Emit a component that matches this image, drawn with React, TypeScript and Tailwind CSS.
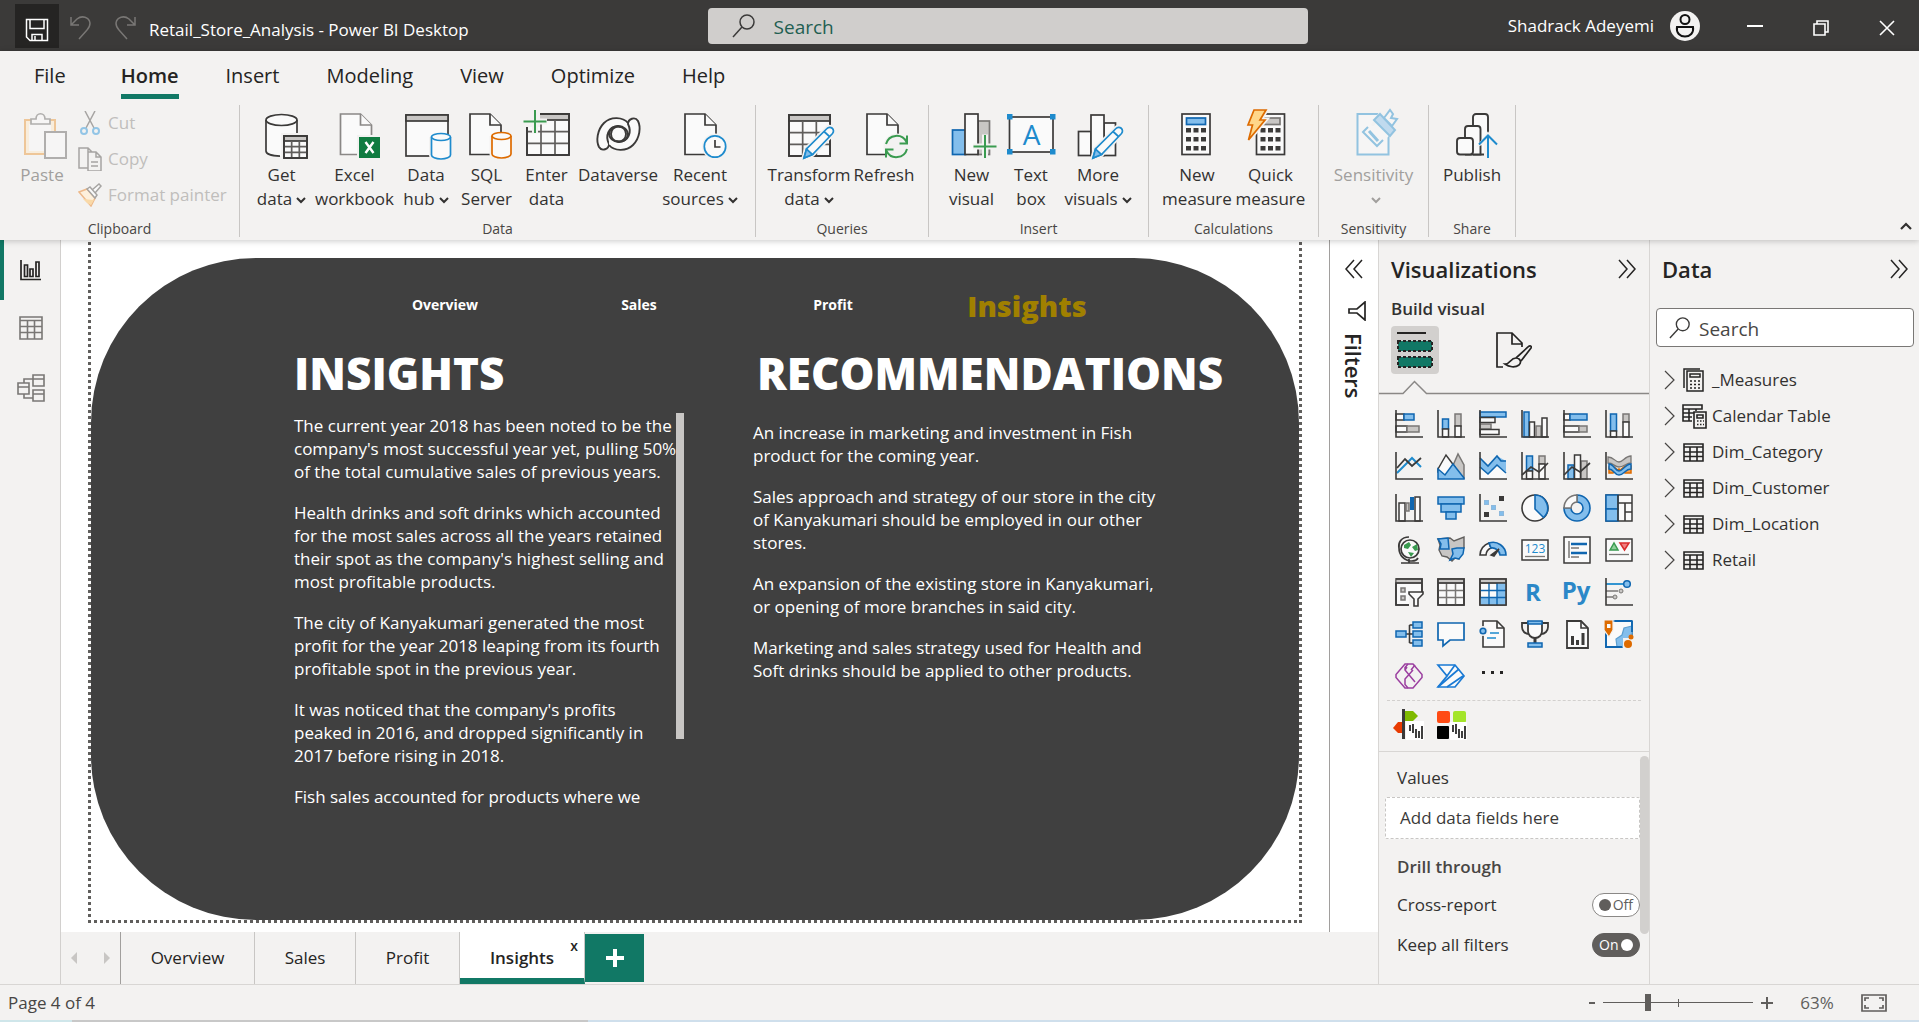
import React from "react";

type Kind = "w" | "b" | "g";
const FILL: Record<Kind, string> = { w: "#fafafa", b: "#83beec", g: "#c8c6c4" };
const LINE: Record<Kind, string> = { w: "#3b3a39", b: "#0f66b0", g: "#797775" };
const DARK = "#3b3a39";

function R({ k, x, y, w, h }: { k: Kind; x: number; y: number; w: number; h: number }) {
  return <rect x={x} y={y} width={w} height={h} fill={FILL[k]} stroke={LINE[k]} strokeWidth="1.5" />;
}
const Axis = () => <path d="M1 0V27H28" fill="none" stroke={DARK} strokeWidth="1.6" />;

/* ---------- ribbon drawings, 48 unit grid ---------- */

function Big({ children, dim }: { children: React.ReactNode; dim?: boolean }) {
  return (
    <svg viewBox="0 0 48 48" aria-hidden="true" className={dim ? "size-12 overflow-visible opacity-45" : "size-12 overflow-visible"} fill="none" strokeWidth="1.7">
      {children}
    </svg>
  );
}
function Doc({ x, c = DARK }: { x: number; c?: string }) {
  return (
    <g transform={`translate(${x} 0)`} stroke={c}>
      <path d="M0 3H20L31 14V43.500H0Z" fill="#fafafa" />
      <path d="M20 3V14H31" fill="#fafafa" />
    </g>
  );
}
function Cyl({ x, y, w, h, c }: { x: number; y: number; w: number; h: number; c: string }) {
  const r = w / 2;
  return (
    <g stroke={c} fill="#fafafa">
      <path d={`M${x} ${y + 4}V${y + h - 4}A${r} 4 0 0 0 ${x + w} ${y + h - 4}V${y + 4}`} stroke="#f3f2f1" strokeWidth="5" />
      <path d={`M${x} ${y + 4}V${y + h - 4}A${r} 4 0 0 0 ${x + w} ${y + h - 4}V${y + 4}`} />
      <ellipse cx={x + r} cy={y + 4} rx={r} ry="3.5" />
    </g>
  );
}
function Grid({ x, y, w, h, hd }: { x: number; y: number; w: number; h: number; hd: number }) {
  const b = h - hd;
  return (
    <g stroke={DARK}>
      <rect x={x} y={y} width={w} height={h} fill="#fafafa" />
      <rect x={x} y={y} width={w} height={hd} fill="#c8c6c4" />
      <path
        stroke="#605e5c"
        d={`M${x + w / 3} ${y + hd}v${b}M${x + (2 * w) / 3} ${y + hd}v${b}M${x} ${y + hd + b / 3}h${w}M${x} ${y + hd + (2 * b) / 3}h${w}`}
      />
      <rect x={x} y={y} width={w} height={h} />
    </g>
  );
}
function Pencil() {
  return (
    <g>
      <path d="M19 47l2.500-9L42 17.500a3.500 3.500 0 0 1 5.500 5L27.500 43.500z" fill="#fafafa" stroke="#f3f2f1" strokeWidth="5" />
      <path d="M19 47l2.500-9L42 17.500a3.500 3.500 0 0 1 5.500 5L27.500 43.500z" fill="#fafafa" stroke="#1e8bcd" />
      <path d="M19 47l2.500-9 6 5.500z" fill="#83beec" stroke="#1e8bcd" />
      <path d="M39 20.500l5.500 5" stroke="#1e8bcd" />
    </g>
  );
}
function Plus({ x, y }: { x: number; y: number }) {
  return (
    <g>
      <path d={`M${x - 12} ${y}h24M${x} ${y - 12}v24`} stroke="#f3f2f1" strokeWidth="6" />
      <path d={`M${x - 11.5} ${y}h23M${x} ${y - 11.5}v23`} stroke="#3a9b50" strokeWidth="2" />
    </g>
  );
}
function Calc({ x, hot }: { x: number; hot?: boolean }) {
  return (
    <g transform={`translate(${x} 0)`}>
      <rect x="0" y="3" width="28" height="40.500" fill="#fafafa" stroke={DARK} />
      <rect x="4.500" y="7" width="19" height="6.500" fill={hot ? "#83beec" : "#c8c6c4"} stroke={hot ? "#0f66b0" : "#797775"} />
      {[17, 26, 35].map((ky) =>
        [4, 11.5, 19].map((kx) => <rect key={`${kx}-${ky}`} x={kx} y={ky} width="5" height="4.500" fill={DARK} />)
      )}
    </g>
  );
}

const GetDataIcon = () => (
  <Big>
    <path d="M8 9V40C8 43 15 45 23 45V22H39V9Z" fill="#fafafa" />
    <ellipse cx="23.500" cy="9" rx="15.500" ry="5.500" fill="#fafafa" stroke={DARK} />
    <path d="M8 9V40C8 43 14 45 22 45.200M39 9V22" stroke={DARK} />
    <Grid x={26} y={25} w={23} h={22} hd={5} />
  </Big>
);
const ExcelIcon = () => (
  <Big>
    <Doc x={9.5} c="#8a8886" />
    <rect x="26" y="24" width="24" height="24" fill="#f3f2f1" />
    <rect x="28" y="26" width="21" height="21" fill="#107c41" />
    <path d="M34.500 31L42.500 42M42.500 31L34.500 42" stroke="#fff" strokeWidth="2.400" />
  </Big>
);
const HubIcon = () => (
  <Big>
    <rect x="4" y="4" width="42" height="41" fill="#fafafa" stroke={DARK} />
    <rect x="4" y="4" width="42" height="6" fill="#c8c6c4" stroke={DARK} />
    <Cyl x={29.5} y={22} w={19} h={26} c="#1e8bcd" />
  </Big>
);
const SqlIcon = () => (
  <Big>
    <Doc x={7} />
    <Cyl x={29} y={21} w={19} h={26} c="#dd6b00" />
  </Big>
);
const EnterIcon = () => (
  <Big>
    <Grid x={4} y={3} w={42} h={41} hd={6} />
    <rect x="-1" y="-2" width="18" height="18" fill="#f3f2f1" />
    <Plus x={12} y={10.5} />
  </Big>
);
const DataverseIcon = () => (
  <Big>
    <g stroke={DARK} strokeWidth="1.900" fill="#fafafa">
      <path d="M34 12C29 6 17 5 10 12C3 19 2 30 5 36C8 41 15 38 15 33C11 25 14 16 24 15C30 15 34 19 34 24" />
      <path d="M15 34C20 40 32 41 39 34C46 27 47 16 44 10C41 5 34 8 34 13C38 21 35 30 25 31C19 31 15 27 15 22" />
      <circle cx="24.500" cy="23" r="7.500" />
      <path d="M15 24C15 17 21 14 27 16M34 22C34 29 28 32 22 30" fill="none" />
    </g>
  </Big>
);
const RecentIcon = () => (
  <Big>
    <Doc x={9} />
    <circle cx="39" cy="35.500" r="13" fill="#f3f2f1" />
    <circle cx="39" cy="35.500" r="10.700" fill="#fafafa" stroke="#1e8bcd" />
    <path d="M39 29V36H44.500" stroke={DARK} />
  </Big>
);
const TransformIcon = () => (
  <Big>
    <Grid x={4} y={4} w={41} h={41} hd={6} />
    <Pencil />
  </Big>
);
const RefreshIcon = () => (
  <Big>
    <Doc x={7} />
    <circle cx="36.500" cy="35.500" r="13" fill="#f3f2f1" />
    <g stroke="#3a9b50" strokeWidth="2">
      <path d="M26 33A11 11 0 0 1 46.500 31M47 24.500V32.500H39.500" />
      <path d="M47 38A11 11 0 0 1 26.500 40M26 46.500V38.500H33.500" />
    </g>
  </Big>
);
const NewVisualIcon = () => (
  <Big>
    <rect x="4.500" y="19" width="13" height="24.500" fill="#83beec" stroke="#0f66b0" />
    <rect x="30" y="10" width="11.500" height="33.500" fill="#c8c6c4" stroke="#797775" />
    <rect x="17" y="3" width="13" height="40.500" fill="#fafafa" stroke={DARK} />
    <Plus x={37} y={35.5} />
  </Big>
);
const TextBoxIcon = () => (
  <Big>
    <rect x="2.500" y="6" width="43.500" height="35" fill="#fafafa" stroke={DARK} />
    {[0, 43].map((x) => [3, 38].map((y) => <rect key={`${x}-${y}`} x={x} y={y} width="5.500" height="5.500" fill="#1e8bcd" />))}
    <text x="24.500" y="33.500" textAnchor="middle" fontSize="28" fill="#1e8bcd" className="font-['Open_Sans',sans-serif]">A</text>
  </Big>
);
const MoreVisualsIcon = () => (
  <Big>
    <g fill="#fafafa" stroke={DARK}>
      <rect x="4.500" y="20.500" width="12.500" height="24" />
      <rect x="30" y="12" width="11.500" height="32.500" />
      <rect x="17" y="4" width="13" height="40.500" />
    </g>
    <Pencil />
  </Big>
);
const NewMeasureIcon = () => (
  <Big>
    <Calc x={9} hot />
  </Big>
);
const QuickMeasureIcon = () => (
  <Big>
    <Calc x={9.5} />
    <path d="M7 -1H19L13 9H18L1.500 29L5.500 14H1Z" fill="#f3f2f1" stroke="#f3f2f1" strokeWidth="5" />
    <path d="M7 -1H19L13 9H18L1.500 29L5.500 14H1Z" fill="#ffd78a" stroke="#dd6b00" />
  </Big>
);
const SensitivityIcon = () => (
  <Big dim>
    <rect x="7.500" y="3" width="31" height="40.500" fill="#fafafa" stroke="#1e8bcd" strokeWidth="2" />
    <path d="M21 14L31 -2L50 8L42 24L36 22Z" fill="#f3f2f1" />
    <g stroke="#1e8bcd" strokeWidth="2">
      <path d="M27 11L14 26V31L27 36L41 23Z" fill="#fafafa" stroke="none" />
      <path d="M18 16L13 21L27 35L33 29" fill="#fafafa" />
      <path d="M19 20L28 30" strokeWidth="3" />
      <path d="M24 9L40 25L45 19L30 3Z" fill="#83beec" />
      <path d="M34 7L40 -1L43 3L41 7L47 8L42 15Z" fill="#fafafa" />
    </g>
  </Big>
);
const PublishIcon = () => (
  <Big>
    <g fill="#fafafa" stroke={DARK} strokeWidth="1.900">
      <path d="M25 43V6a3 3 0 0 1 3-3H37a3 3 0 0 1 3 3V43.500H25" />
      <path d="M17 43V18a3 3 0 0 1 3-3H29.500a3 3 0 0 1 3 3V43.500H17" />
      <rect x="9" y="27" width="16" height="16.500" rx="3" />
    </g>
    <path d="M40 22L49 34L43 32V47H37V32L31 34Z" fill="#f3f2f1" stroke="#f3f2f1" strokeWidth="2" />
    <path d="M40 47V25M31 33.500L40 24.500L49 33.500" stroke="#1e8bcd" strokeWidth="2" />
  </Big>
);
const PasteIcon = () => (
  <Big dim>
    <rect x="7" y="9" width="30" height="34" fill="#ffe9c4" stroke="#e8912d" strokeWidth="2" />
    <rect x="11" y="13" width="22" height="27" fill="#fafafa" />
    <path d="M13 13V8H18C18 1 27 1 27 8H32V13Z" fill="#fafafa" stroke="#605e5c" />
    <rect x="27" y="21" width="21" height="26" fill="#fafafa" stroke="#605e5c" strokeWidth="2" />
  </Big>
);

/* ---------- visual gallery drawings, 28 unit grid ---------- */

const gallery: [string, React.ReactNode][] = [
  ["Stacked bar chart", <><R k="w" x={1} y={4} w={8} h={6} /><R k="b" x={9} y={4} w={10} h={6} /><R k="w" x={1} y={16} w={11} h={6} /><R k="g" x={12} y={16} w={12} h={6} /><Axis /></>],
  ["Stacked column chart", <><R k="b" x={5.5} y={9} w={6} h={10} /><R k="w" x={5.5} y={19} w={6} h={8} /><R k="g" x={18} y={4} w={6} h={12} /><R k="w" x={18} y={16} w={6} h={11} /><Axis /></>],
  ["Clustered bar chart", <><R k="b" x={1} y={2} w={26} h={5} /><R k="w" x={1} y={7.5} w={15} h={5} /><R k="g" x={1} y={14} w={11} h={5} /><R k="w" x={1} y={19.5} w={19} h={5} /><Axis /></>],
  ["Clustered column chart", <><R k="b" x={3} y={2} w={5} h={25} /><R k="w" x={8.5} y={12} w={5} h={15} /><R k="g" x={15} y={16} w={5} h={11} /><R k="w" x={21} y={8} w={5} h={19} /><Axis /></>],
  ["100% stacked bar chart", <><R k="w" x={1} y={4} w={6} h={6} /><R k="b" x={7} y={4} w={17} h={6} /><R k="w" x={1} y={16} w={15} h={6} /><R k="g" x={16} y={16} w={8} h={6} /><Axis /></>],
  ["100% stacked column chart", <><R k="b" x={5.5} y={4} w={6} h={17} /><R k="w" x={5.5} y={21} w={6} h={6} /><R k="g" x={18} y={4} w={6} h={8} /><R k="w" x={18} y={12} w={6} h={15} /><Axis /></>],
  ["Line chart", <><path d="M2 21L17 6L26 15" stroke="#1e8bcd" strokeWidth="2" /><path d="M2 16L10 7L17 14L26 6" stroke={DARK} strokeWidth="1.8" /><Axis /></>],
  ["Area chart", <><path d="M14 18L21 2L27 13V26Z" fill="#c8c6c4" stroke="#797775" strokeWidth="1.5" /><path d="M1 17L9 3L18 15L8 25L1 20Z" fill="#fafafa" stroke={DARK} strokeWidth="1.5" /><path d="M1 17L8 23L16 12L27 26V27H1Z" fill="#83beec" stroke="#0f66b0" strokeWidth="1.5" /></>],
  ["Stacked area chart", <><path d="M1 15L9 23L18 13L27 21V27H1Z" fill="#fafafa" /><path d="M1 6L9 14L18 4L27 9V20L18 13L9 22L1 15Z" fill="#83beec" /><path d="M1 6L9 14L18 4L22 9H27M1 15L9 22L18 13L27 21" stroke="#0f66b0" strokeWidth="1.6" /><Axis /></>],
  ["Line and stacked column chart", <><R k="b" x={5.5} y={4} w={6} h={15} /><R k="w" x={5.5} y={19} w={6} h={8} /><R k="g" x={18} y={4} w={6} h={8} /><R k="w" x={18} y={12} w={6} h={15} /><path d="M1 23L10 15L18 20L27 11" stroke={DARK} strokeWidth="1.7" /><Axis /></>],
  ["Line and clustered column chart", <><R k="b" x={5} y={13} w={6} h={14} /><R k="g" x={18} y={9} w={6} h={18} /><R k="w" x={11.5} y={3} w={6} h={24} /><path d="M1 23L9 15L17 20L27 11" stroke={DARK} strokeWidth="1.7" /><Axis /></>],
  ["Ribbon chart", <><path d="M4 15H9L14 19L20 14H26V21H20L14 17L8 21H4Z" fill="#f8a04a" stroke="#dd6b00" strokeWidth="1.5" /><path d="M3 5C9 5 10 10 14 10S20 4 26 4V11C21 11 19 15 14 15S9 11 3 11Z" fill="#c8c6c4" stroke="#797775" strokeWidth="1.3" /><path d="M4 12C9 12 10 19 14 19S20 12 26 12V17C20 17 19 23 14 23S9 17 4 17Z" fill="#83beec" stroke="#0f66b0" strokeWidth="1.5" /><Axis /></>],
  ["Waterfall chart", <><R k="w" x={4} y={9} w={6} h={18} /><R k="g" x={11} y={9} w={3} h={8} /><rect x="15" y="3" width="4" height="13" fill="#0f66b0" /><R k="w" x={20} y={3} w={5} h={24} /><Axis /></>],
  ["Funnel", <><R k="b" x={1} y={3} w={26} h={7} /><R k="b" x={4} y={10} w={20} h={8} /><R k="b" x={9} y={18} w={10} h={7} /></>],
  ["Scatter chart", <><rect x="20" y="2" width="5" height="5" fill={DARK} /><rect x="5" y="18" width="5" height="5" fill={DARK} /><g fill="#83beec" stroke="#8db8dc"><rect x="5.500" y="6.500" width="4" height="4" /><rect x="12.500" y="11.500" width="4" height="4" /><rect x="20.500" y="17.500" width="4" height="4" /></g><Axis /></>],
  ["Pie chart", <><circle cx="14" cy="14" r="13" fill="#fafafa" stroke={DARK} strokeWidth="1.6" /><path d="M14 1A13 13 0 0 1 22.500 23.500L14 15Z" fill="#83beec" stroke="#0f66b0" strokeWidth="1.6" /></>],
  ["Donut chart", <><path d="M14 1A13 13 0 1 1 1 14H8A6 6 0 1 0 14 8Z" fill="#83beec" stroke="#0f66b0" strokeWidth="1.6" /><path d="M1 14A13 13 0 0 1 14 1V8A6 6 0 0 0 8 14Z" fill="#fafafa" stroke="#797775" strokeWidth="1.6" /></>],
  ["Treemap", <><R k="w" x={1} y={1} w={26} h={26} /><R k="b" x={1} y={1} w={12} h={14} /><R k="b" x={1} y={15} w={12} h={12} /><path d="M13 1V27M13 9H27M20 9V27M20 18H27" stroke={DARK} strokeWidth="1.6" /></>],
  ["Map", <><circle cx="15" cy="13" r="9" fill="#fafafa" stroke={DARK} strokeWidth="1.7" /><path d="M9 9L14 6L16 9L13 13L9 12ZM17 11L22 8L23 14L20 15ZM13 16L19 17L16 21Z" fill="#3a9b50" /><path d="M14 1C6 1 3 7 4 12C4 19 9 25 17 25C20 25 22 24 23 22M14 23V27M6 27H24" stroke={DARK} strokeWidth="1.7" /></>],
  ["Filled map", <><path d="M1 3L13 2L17 5L27 1V12L23 15L22 23L18 22L15 25L10 21L5 20L2 14L3 9Z" fill="#c8c6c4" stroke="#605e5c" strokeWidth="1.4" /><path d="M1 3L11 2L12 13H3L4 8Z" fill="#83beec" stroke="#0f66b0" strokeWidth="1.5" /><path d="M15 13L20 12H27L26 18L22 23L18 22L13 24L16 18Z" fill="#83beec" stroke="#0f66b0" strokeWidth="1.5" /></>],
  ["Gauge", <><path d="M1 19A13 13 0 0 1 10 7L12 12A8 8 0 0 0 7 19Z" fill="#fafafa" stroke={DARK} strokeWidth="1.6" /><path d="M10 7A13 13 0 0 1 27 19H21A8 8 0 0 0 12 12Z" fill="#83beec" stroke="#0f66b0" strokeWidth="1.6" /><path d="M12 19L20 13L15 20Z" fill={DARK} stroke={DARK} strokeWidth="1.5" /></>],
  ["Card", <><R k="w" x={1} y={4} w={26} h={20} /><text x="14" y="17" textAnchor="middle" fontSize="12" fill="#1e8bcd">123</text><path d="M4 20.500H24" stroke="#797775" strokeWidth="1.3" /></>],
  ["Multi-row card", <><R k="w" x={1} y={1} w={26} h={26} /><path d="M6 5V22" stroke="#797775" strokeWidth="1.5" /><path d="M8 8H24M8 17H24" stroke="#0f66b0" strokeWidth="2.400" /><path d="M8 12H16M8 21H16" stroke="#797775" strokeWidth="1.3" /></>],
  ["KPI", <><R k="w" x={1} y={3} w={26} h={22} /><path d="M5 14L9 7L13 14Z" fill="#8fd09a" stroke="#3a9b50" strokeWidth="1.5" /><path d="M15 7H24L19.500 14Z" fill="#f08080" stroke="#d92c2c" strokeWidth="1.5" /><path d="M4 18.500H24" stroke="#797775" strokeWidth="1.3" /></>],
  ["Slicer", <><R k="w" x={1} y={1} w={26} h={26} /><R k="g" x={1} y={1} w={26} h={4} /><path d="M1 1H27V5H1V27H15M27 1V14" stroke={DARK} strokeWidth="1.6" /><path d="M14 14H30V29H14Z" fill="#f3f2f1" /><R k="g" x={6} y={10} w={4} h={4} /><R k="g" x={6} y={18} w={4} h={4} /><path d="M14 14H28V16L23 21V28H19V21L14 16Z" fill="#fafafa" stroke={DARK} strokeWidth="1.6" /></>],
  ["Table", <><R k="w" x={1} y={1} w={26} h={26} /><R k="g" x={1} y={1} w={26} h={4} /><path d="M1 12.500H27M1 19.500H27M9.500 5V27M18.500 5V27" stroke="#797775" strokeWidth="1.5" /><path d="M1 1H27V27H1ZM1 5H27" stroke={DARK} strokeWidth="1.6" /></>],
  ["Matrix", <><R k="w" x={1} y={1} w={26} h={26} /><R k="g" x={1} y={1} w={26} h={4} /><path d="M1 20H18V5H27V27H1Z" fill="#83beec" /><path d="M1 12.500H27M1 19.500H27M10 5V27M18 5V27" stroke="#0f66b0" strokeWidth="1.4" /><path d="M1 1H27V27H1ZM1 5H27" stroke={DARK} strokeWidth="1.6" /></>],
  ["R script visual", <text x="12" y="23" textAnchor="middle" fontSize="24" fontWeight="700" fill="#2b88c8">R</text>],
  ["Python visual", <text x="13" y="21" textAnchor="middle" fontSize="24" fontWeight="700" fill="#2b88c8">Py</text>],
  ["Key influencers", <><path d="M1 6H18" stroke="#1e8bcd" strokeWidth="1.8" /><path d="M1 13H13M1 19H8" stroke="#797775" strokeWidth="1.6" /><circle cx="22" cy="6" r="3.300" fill="#83beec" stroke="#0f66b0" strokeWidth="1.5" /><circle cx="16" cy="13" r="2" fill="#c8c6c4" stroke="#797775" /><circle cx="10" cy="19" r="2" fill="#c8c6c4" stroke="#797775" /><Axis /></>],
  ["Decomposition tree", <><path d="M11 14H18M14.500 5V23M14.500 5H18M14.500 23H18" stroke={DARK} strokeWidth="1.6" /><R k="b" x={1} y={11} w={10} h={6} /><R k="b" x={18} y={2} w={9} h={6} /><R k="b" x={18} y={11} w={9} h={6} /><R k="b" x={18} y={20} w={9} h={6} /></>],
  ["Q&A", <path d="M1 3H27V20H13L6 26V20H1Z" fill="#fafafa" stroke="#0f66b0" strokeWidth="1.7" />],
  ["Smart narrative", <><path d="M4 1H18L25 8V27H4Z" fill="#fafafa" stroke={DARK} strokeWidth="1.6" /><path d="M18 1V8H25" stroke={DARK} strokeWidth="1.6" /><circle cx="4" cy="11" r="5" fill="#f3f2f1" /><circle cx="4" cy="11" r="2.800" fill="#83beec" stroke="#0f66b0" strokeWidth="1.6" /><path d="M11 13H20M8 18H17" stroke="#1e8bcd" strokeWidth="1.6" /></>],
  ["Metrics", <><path d="M7 3H1V7C1 11 4 14 8 14M21 3H27V7C27 11 24 14 20 14" stroke={DARK} strokeWidth="1.8" /><path d="M7 2H21V11C21 15 18 18 14 18S7 15 7 11Z" fill="#fafafa" stroke={DARK} strokeWidth="1.8" /><R k="b" x={7} y={1} w={14} h={3} /><path d="M14 18V23" stroke={DARK} strokeWidth="3" /><R k="b" x={7} y={23} w={14} h={4} /></>],
  ["Paginated report", <><path d="M4 1H18L25 8V28H4Z" fill="#fafafa" stroke={DARK} strokeWidth="1.8" /><path d="M18 1V8H25" stroke={DARK} strokeWidth="1.6" /><path d="M9.500 16V25M14.500 20V25M20 13V25" stroke={DARK} strokeWidth="3" /></>],
  ["ArcGIS map", <><path d="M1 1H27V27H1Z" fill="#fafafa" stroke="#0f66b0" strokeWidth="1.6" /><path d="M27 6L19 8L17 15L11 19L12 27H27Z" fill="#83beec" stroke="#5d9fd0" strokeWidth="1.2" /><path d="M27 1V12M1 14V27H17M10 1H27" stroke="#0f66b0" strokeWidth="1.8" /><path d="M-1 0H8V10L4 17L-1 10Z" fill="#dd6b00" stroke="#f3f2f1" strokeWidth="1.200" /><rect x="2" y="4" width="3.500" height="4" fill="#fafafa" /><path d="M18 18H29V29H18Z" fill="#f3f2f1" /><circle cx="23" cy="24" r="4" fill="#dd6b00" /><circle cx="26" cy="17" r="2.500" fill="#dd6b00" /></>],
  ["Power Apps", <g stroke="#9b3fa0" strokeWidth="1.5"><path d="M10 2L1 12.500V15.500L10 26H18L27 15.500V12.500L18 2Z" /><path d="M13 2L10 5.500V8L20 20M18 8L10 17V22.500L13 26M10 8L12 5M20 3L16 8" /></g>],
  ["Power Automate", <g stroke="#1a7ad4" strokeWidth="1.7"><path d="M1 3H18L27 14L18 25H1L10 14Z" fill="#fafafa" /><path d="M10 14L18 3M1 25L22 7M10 25L26 14" /></g>],
];

function MoreDots() {
  return (
    <svg viewBox="0 0 28 28" className="size-7" aria-hidden="true">
      <path d="M3 9h3v3H3zM12 9h3v3h-3zM21 9h3v3h-3z" fill="#252423" />
    </svg>
  );
}

/* ---------- small shared drawings ---------- */

function Magnifier({ className }: { className: string }) {
  return (
    <svg viewBox="0 0 24 24" className={className} fill="none" stroke="currentColor" strokeWidth="1.500" aria-hidden="true">
      <circle cx="15" cy="8" r="7" />
      <path d="M10 13L1 23" />
    </svg>
  );
}
function DoubleChevron({ left }: { left?: boolean }) {
  return (
    <svg viewBox="0 0 20 20" className="size-5" fill="none" stroke="#252423" strokeWidth="1.500" aria-hidden="true">
      <path d={left ? "M10 1L2 10L10 19M18 1L10 10L18 19" : "M2 1L10 10L2 19M10 1L18 10L10 19"} />
    </svg>
  );
}
const Caret = () => (
  <svg viewBox="0 0 10 8" className="ml-1 inline h-2 w-2.5" fill="none" stroke="currentColor" strokeWidth="2" aria-hidden="true">
    <path d="M1 2L5 6L9 2" />
  </svg>
);

function Tool({ icon, lines, width, caret, dim }: { icon: React.ReactNode; lines: string[]; width: string; caret?: boolean; dim?: boolean }) {
  return (
    <button type="button" disabled={dim} className={`${width} flex shrink-0 flex-col items-center whitespace-nowrap text-[17px] leading-6 ${dim ? "text-[#a19f9d]" : "text-[#323130]"}`}>
      {icon}
      <span className="mt-1">{lines[0]}</span>
      {(lines[1] !== undefined) && (
        <span>
          {lines[1]}
          {caret && <Caret />}
        </span>
      )}
    </button>
  );
}
function Group({ label, className, children }: { label: string; className: string; children: React.ReactNode }) {
  return (
    <section aria-label={label} className="flex h-33 shrink-0 flex-col justify-between border-r border-[#c8c6c4]">
      <div className={`flex pt-1.5 ${className}`}>{children}</div>
      <div className="text-center text-sm leading-4 text-[#484644]">{label}</div>
    </section>
  );
}

function Toggle({ label, on }: { label: string; on: boolean }) {
  return (
    <label className="flex h-10 items-center justify-between text-[17px] text-[#323130]">
      {label}
      <input type="checkbox" defaultChecked={on} className="peer sr-only" />
      <span className={`flex h-6 w-12 items-center justify-between rounded-full border px-1.5 text-sm ${on ? "border-[#605e5c] bg-[#605e5c] text-white" : "border-[#8a8886] bg-white text-[#605e5c]"}`}>
        {on ? <span>On</span> : <span className="size-3 rounded-full bg-[#605e5c]" />}
        {on ? <span className="size-3 rounded-full bg-white" /> : <span>Off</span>}
      </span>
    </label>
  );
}

const TableGlyph = () => (
  <svg viewBox="0 0 24 24" className="size-6" fill="none" stroke="#252423" strokeWidth="1.600" aria-hidden="true">
    <path d="M2 4H21V21H2ZM2 7H21M2 12H21M2 16.500H21M8 7V21M15 7V21" />
  </svg>
);
const MeasureGlyph = () => (
  <svg viewBox="0 0 24 24" className="size-6" fill="none" stroke="#252423" strokeWidth="1.500" aria-hidden="true">
    <path d="M2 20V1H18M5 3H21V23H5ZM8 6H18V9H8Z" />
    <path d="M8 13H19M8 16.500H19M8 20H19" strokeDasharray="2 2" />
  </svg>
);
const CalendarGlyph = () => (
  <svg viewBox="0 0 24 24" className="size-6 overflow-visible" fill="none" stroke="#252423" strokeWidth="1.600" aria-hidden="true">
    <path d="M1 1H20V5H1ZM1 5V17H10M1 9H12M1 13H10M7 5V17M14 5V7" />
    <path d="M12 8H24V24H12ZM15 11H21V14H15Z" />
    <path d="M15 17H22M15 20.500H22" strokeDasharray="1.500 1.500" />
  </svg>
);

const fields: [string, React.ReactNode][] = [
  ["_Measures", <MeasureGlyph />],
  ["Calendar Table", <CalendarGlyph />],
  ["Dim_Category", <TableGlyph />],
  ["Dim_Customer", <TableGlyph />],
  ["Dim_Location", <TableGlyph />],
  ["Retail", <TableGlyph />],
];

const insights = [
  ["The current year 2018 has been noted to be the", "company's most successful year yet, pulling 50%", "of the total cumulative sales of previous years."],
  ["Health drinks and soft drinks which accounted", "for the most sales across all the years retained", "their spot as the company's highest selling and", "most profitable products."],
  ["The city of Kanyakumari generated the most", "profit for the year 2018 leaping from its fourth", "profitable spot in the previous year."],
  ["It was noticed that the company's profits", "peaked in 2016, and dropped significantly in", "2017 before rising in 2018."],
  ["Fish sales accounted for products where we"],
];
const recommendations = [
  ["An increase in marketing and investment in Fish", "product for the coming year."],
  ["Sales approach and strategy of our store in the city", "of Kanyakumari should be employed in our other", "stores."],
  ["An expansion of the existing store in Kanyakumari,", "or opening of more branches in said city."],
  ["Marketing and sales strategy used for Health and", "Soft drinks should be applied to other products."],
];
function Paragraphs({ items }: { items: string[][] }) {
  return (
    <div className="flex flex-col gap-4.5 text-[17px] leading-[23px] whitespace-nowrap text-white">
      {items.map((lines) => (
        <p key={lines[0]}>
          {lines.map((l) => (
            <span key={l} className="block">{l}</span>
          ))}
        </p>
      ))}
    </div>
  );
}

function TitleBar() {
  return (
    <header className="flex h-[51px] shrink-0 items-center bg-[#3b3a39] text-white">
      <div className="flex min-w-0 flex-[707] items-center">
        <button type="button" aria-label="Save" className="ml-[15px] flex h-11 w-11 items-center justify-center self-start bg-[#252423]">
          <svg viewBox="0 0 24 24" className="mt-2 size-6" fill="none" stroke="#fff" strokeWidth="1.500" aria-hidden="true">
            <path d="M1.500 1.500H22.500V22.500H5L1.500 19ZM5 1.500V10.500H19V1.500M7 22.500V16.500H17V22.500M10 18V22.500" />
          </svg>
        </button>
        <button type="button" aria-label="Undo" className="ml-2.5">
          <svg viewBox="0 0 24 24" className="mt-1 size-6" fill="none" stroke="#797775" strokeWidth="1.500" aria-hidden="true">
            <path d="M2 1V9H10M2 9L8 3C13 -1 20 1 21 7C21 10 20 12 18 14L10 23" />
          </svg>
        </button>
        <button type="button" aria-label="Redo" className="ml-5">
          <svg viewBox="0 0 24 24" className="mt-1 size-6" fill="none" stroke="#797775" strokeWidth="1.500" aria-hidden="true">
            <path d="M22 1V9H14M22 9L16 3C11 -1 4 1 3 7C3 10 4 12 6 14L14 23" />
          </svg>
        </button>
        <h1 className="ml-3 pt-2 text-[17px] whitespace-nowrap">Retail_Store_Analysis - Power BI Desktop</h1>
      </div>
      <label className="mt-px flex h-9 w-[600px] shrink-0 items-center rounded-sm bg-[#d0cecc] pl-6">
        <Magnifier className="size-6 text-[#3b3a39]" />
        <input type="text" aria-label="Search" placeholder="Search" className="mt-0.5 ml-[18px] flex-1 bg-transparent text-[19px] outline-none placeholder:text-[#1f5f52]" />
      </label>
      <div className="flex min-w-0 flex-[587] items-center justify-end pr-6">
        <span className="text-[17px] whitespace-nowrap">Shadrack Adeyemi</span>
        <svg viewBox="0 0 30 30" className="ml-4 size-[30px]" aria-hidden="true">
          <circle cx="15" cy="15" r="15" fill="#f3f2f1" />
          <g fill="none" stroke="#111" strokeWidth="2">
            <circle cx="15" cy="8.500" r="4.500" />
            <path d="M7 16H23C24 22 20 25.500 15 25.500S6 22 7 16Z" />
          </g>
        </svg>
        <button type="button" aria-label="Minimize" className="ml-[47px] h-0.5 w-4 bg-white" />
        <button type="button" aria-label="Restore" className="ml-[50px]">
          <svg viewBox="0 0 16 16" className="mt-1 size-4" fill="none" stroke="#fff" strokeWidth="1.600" aria-hidden="true">
            <path d="M1 4H12V15H1ZM4 4V1H15V12H12" />
          </svg>
        </button>
        <button type="button" aria-label="Close" className="ml-[50px]">
          <svg viewBox="0 0 16 16" className="mt-1 size-4" fill="none" stroke="#fff" strokeWidth="1.600" aria-hidden="true">
            <path d="M1 1L15 15M15 1L1 15" />
          </svg>
        </button>
      </div>
    </header>
  );
}

function Ribbon() {
  const tab = "pb-1 text-xl leading-7";
  return (
    <div className="relative z-10 flex h-[189px] shrink-0 flex-col bg-[#f3f2f1] shadow-[0_1px_6px_rgba(0,0,0,0.22)]">
      <nav aria-label="Ribbon tabs" className="flex items-start gap-[47px] pt-[11px] pl-[34px] text-[#252423]">
        <button type="button" className={`${tab} mr-2`}>File</button>
        <button type="button" className={`${tab} border-b-5 border-[#117865] font-semibold`}>Home</button>
        <button type="button" className={tab}>Insert</button>
        <button type="button" className={tab}>Modeling</button>
        <button type="button" className={tab}>View</button>
        <button type="button" className={tab}>Optimize</button>
        <button type="button" className={tab}>Help</button>
      </nav>
      <div className="mt-1.5 flex">
        <Group label="Clipboard" className="w-[239px] pl-3">
          <Tool icon={<PasteIcon />} lines={["Paste"]} width="w-[60px]" dim />
          <div className="-mt-1.5 flex flex-col pl-1.5 text-[17px] leading-9 whitespace-nowrap text-[#c0bebc]">
            <button type="button" disabled className="flex h-9 items-center gap-1.5">
              <svg viewBox="0 0 24 24" className="size-6" fill="none" strokeWidth="1.500" aria-hidden="true">
                <path d="M7 0L16 17M17 0L8 17" stroke="#a6a4a2" />
                <circle cx="6" cy="20" r="3" stroke="#93c5e6" strokeWidth="2" />
                <circle cx="18" cy="20" r="3" stroke="#93c5e6" strokeWidth="2" />
              </svg>
              Cut
            </button>
            <button type="button" disabled className="flex h-9 items-center gap-1.5">
              <svg viewBox="0 0 24 24" className="size-6" fill="none" stroke="#a6a4a2" strokeWidth="1.500" aria-hidden="true">
                <path d="M10 21H1V1H10L14 5M10 1V5M10 5H18L23 10V24H10ZM18 5V10H23M13 15H20M13 19H20" />
              </svg>
              Copy
            </button>
            <button type="button" disabled className="flex h-9 items-center gap-1.5">
              <svg viewBox="0 0 24 24" className="size-6" fill="none" strokeWidth="1.500" aria-hidden="true">
                <path d="M1 9L9 6L17 15L13 23Z" fill="#fdf0dc" stroke="#edb98a" />
                <path d="M5 16L16 17L13 22L9 20Z" fill="#f9d9a8" />
                <path d="M9 6L12 4L19 12L17 15ZM14 7L21 1L23 3L17 10" stroke="#a6a4a2" fill="#fafafa" />
              </svg>
              Format painter
            </button>
          </div>
        </Group>
        <Group label="Data" className="pr-4 pl-[11px]">
          <Tool icon={<GetDataIcon />} lines={["Get", "data"]} width="w-[61px]" caret />
          <Tool icon={<ExcelIcon />} lines={["Excel", "workbook"]} width="w-[85px]" />
          <Tool icon={<HubIcon />} lines={["Data", "hub"]} width="w-[58px]" caret />
          <Tool icon={<SqlIcon />} lines={["SQL", "Server"]} width="w-[63px]" />
          <Tool icon={<EnterIcon />} lines={["Enter", "data"]} width="w-[57px]" />
          <Tool icon={<DataverseIcon />} lines={["Dataverse"]} width="w-[86px]" />
          <Tool icon={<RecentIcon />} lines={["Recent", "sources"]} width="w-[78px]" caret />
        </Group>
        <Group label="Queries" className="px-[11px]">
          <Tool icon={<TransformIcon />} lines={["Transform", "data"]} width="w-[84px]" caret />
          <Tool icon={<RefreshIcon />} lines={["Refresh"]} width="w-[66px]" />
        </Group>
        <Group label="Insert" className="px-3">
          <Tool icon={<NewVisualIcon />} lines={["New", "visual"]} width="w-[61px]" />
          <Tool icon={<TextBoxIcon />} lines={["Text", "box"]} width="w-[58px]" />
          <Tool icon={<MoreVisualsIcon />} lines={["More", "visuals"]} width="w-[76px]" caret />
        </Group>
        <Group label="Calculations" className="px-[11px]">
          <Tool icon={<NewMeasureIcon />} lines={["New", "measure"]} width="w-[74px]" />
          <Tool icon={<QuickMeasureIcon />} lines={["Quick", "measure"]} width="w-[73px]" />
        </Group>
        <Group label="Sensitivity" className="px-3">
          <Tool icon={<SensitivityIcon />} lines={["Sensitivity", ""]} width="w-[85px]" caret dim />
        </Group>
        <Group label="Share" className="px-2">
          <Tool icon={<PublishIcon />} lines={["Publish"]} width="w-[70px]" />
        </Group>
        <button type="button" aria-label="Collapse ribbon" className="mr-1.5 mb-1.5 ml-auto self-end">
          <svg viewBox="0 0 14 10" className="h-2.5 w-3.5" fill="none" stroke="#323130" strokeWidth="2.200" aria-hidden="true">
            <path d="M2 8L7 3L12 8" />
          </svg>
        </button>
      </div>
    </div>
  );
}

function ViewRail() {
  return (
    <nav aria-label="Views" className="flex w-[61px] shrink-0 flex-col border-r border-[#d2d0ce] bg-[#f3f2f1]">
      <button type="button" aria-label="Report view" className="flex h-15 items-center border-l-4 border-[#117865] pl-4">
        <svg viewBox="0 0 22 22" className="size-[22px]" fill="none" stroke="#252423" strokeWidth="1.700" aria-hidden="true">
          <path d="M1 1V20.500H21M4.500 6H7.500V17.500H4.500ZM10 10H13V17.500H10ZM16 3H19V17.500H16Z" />
        </svg>
      </button>
      <button type="button" aria-label="Table view" className="flex h-14 items-center pl-[19px]">
        <svg viewBox="0 0 24 24" className="size-6" fill="none" stroke="#797775" strokeWidth="1.600" aria-hidden="true">
          <path d="M1 1H23V23H1ZM1 4.500H23M1 10.500H23M1 16.500H23M8.500 4.500V23M15.500 4.500V23" />
        </svg>
      </button>
      <button type="button" aria-label="Model view" className="flex h-16 items-center pl-[17px]">
        <svg viewBox="0 0 28 28" className="size-7" fill="none" stroke="#797775" strokeWidth="1.600" aria-hidden="true">
          <path d="M16 1H27V12H16ZM16 5H27M16 16H27V27H16ZM16 20H27M1 9H12V20H1ZM1 13H12M7 9V5H16M7 20V24H16" />
        </svg>
      </button>
    </nav>
  );
}

function Report() {
  const nav = "h-12 text-sm font-bold text-white";
  return (
    <main className="flex min-w-0 flex-1 bg-white px-[27px] pb-[9px]">
      <div className="flex min-w-0 flex-1 px-[3px] pt-[18px] pb-[3px] [background:repeating-linear-gradient(180deg,transparent_0_2px,#605e5c_2px_5px,transparent_5px_6px)_0_0/3px_100%_no-repeat,repeating-linear-gradient(180deg,transparent_0_2px,#605e5c_2px_5px,transparent_5px_6px)_100%_0/3px_100%_no-repeat,repeating-linear-gradient(90deg,#605e5c_0_3px,transparent_3px_6px)_0_100%/100%_3px_no-repeat]">
        <article className="min-w-0 flex-1 rounded-[165px] bg-[#404040] pt-[23px]">
          <nav aria-label="Report pages" className="ml-[257px] grid grid-cols-[194px_194px_194px_194px] items-center">
            <button type="button" className={nav}>Overview</button>
            <button type="button" className={nav}>Sales</button>
            <button type="button" className={nav}>Profit</button>
            <button type="button" className="h-12 text-[29px] leading-none font-extrabold text-[#a08000]">Insights</button>
          </nav>
          <div className="grid grid-cols-[459px_1fr] pt-2 pl-[203px]">
            <section>
              <h2 className="text-[44px] leading-[72px] font-extrabold text-white">INSIGHTS</h2>
              <div className="flex items-start pt-[5px]">
                <Paragraphs items={insights} />
                <div className="-mt-px h-[326px] w-2 shrink-0 bg-[#c8c6c4]" />
              </div>
            </section>
            <section>
              <h2 className="ml-1 text-[44px] leading-[72px] font-extrabold text-white">RECOMMENDATIONS</h2>
              <div className="pt-3">
                <Paragraphs items={recommendations} />
              </div>
            </section>
          </div>
        </article>
      </div>
    </main>
  );
}

function PageTabs() {
  const tab = "relative h-full border-r border-[#c8c6c4] text-[17px] text-[#252423]";
  return (
    <nav aria-label="Pages" className="flex h-[52px] shrink-0 bg-[#f3f2f1]">
      <div className="flex w-15 items-center justify-between border-r border-[#a19f9d] px-2.5">
        <button type="button" aria-label="Previous page" className="border-y-6 border-r-6 border-y-transparent border-r-[#c8c6c4]" />
        <button type="button" aria-label="Next page" className="border-y-6 border-l-6 border-y-transparent border-l-[#c8c6c4]" />
      </div>
      <button type="button" className={`${tab} w-[134px]`}>Overview</button>
      <button type="button" className={`${tab} w-[101px]`}>Sales</button>
      <button type="button" className={`${tab} w-[104px]`}>Profit</button>
      <button type="button" className={`${tab} w-[125px] border-b-6 border-b-[#117865] bg-white pt-1.5 font-semibold`}>
        Insights
        <span className="absolute top-1 right-1.5 text-sm leading-5">x</span>
      </button>
      <button type="button" aria-label="New page" className="my-0.5 flex w-[59px] items-center justify-center bg-[#117865]">
        <svg viewBox="0 0 18 18" className="size-[18px]" stroke="#fff" strokeWidth="4" aria-hidden="true">
          <path d="M9 0V18M0 9H18" />
        </svg>
      </button>
    </nav>
  );
}

function FiltersPane() {
  return (
    <aside aria-label="Filters" className="flex w-[49px] shrink-0 flex-col items-center border-l border-[#a19f9d] bg-white pt-[19px]">
      <button type="button" aria-label="Expand filters">
        <DoubleChevron left />
      </button>
      <svg viewBox="0 0 20 20" className="mt-[22px] ml-1.5 size-5" fill="none" stroke="#252423" strokeWidth="1.700" aria-hidden="true">
        <path d="M18 1V19L10 12H2V8H10Z" />
      </svg>
      <span className="mt-3 text-[22px] leading-6 font-semibold text-[#252423] [writing-mode:vertical-rl]">Filters</span>
    </aside>
  );
}

function VisualizationsPane() {
  return (
    <aside aria-label="Visualizations" className="flex w-[272px] shrink-0 flex-col border-x border-[#d8d6d4] bg-[#f3f2f1]">
      <div className="flex items-center justify-between pt-[13px] pr-3 pl-3">
        <h2 className="text-[22px] leading-8 font-semibold text-[#252423]">Visualizations</h2>
        <button type="button" aria-label="Collapse visualizations"><DoubleChevron /></button>
      </div>
      <h3 className="mt-3 pl-3 text-[17px] leading-6 font-semibold text-[#323130]">Build visual</h3>
      <div className="mt-[5px] flex pl-3">
        <button type="button" aria-label="Build visual" className="flex size-12 items-center justify-center rounded bg-[#d2d0ce]">
          <svg viewBox="0 0 36 36" className="size-9" aria-hidden="true">
            <path d="M0 1H29" stroke="#252423" strokeWidth="2" />
            <path d="M1 9H35V19H1ZM1 25H35V35H1Z" fill="#117865" stroke="#252423" strokeWidth="2" strokeDasharray="3 2" />
          </svg>
        </button>
        <button type="button" aria-label="Format visual" className="ml-[51px] flex size-12 items-center justify-center">
          <svg viewBox="0 0 36 36" className="size-9" fill="none" stroke="#252423" strokeWidth="1.700" aria-hidden="true">
            <path d="M7 35H1V1H16L26 11V15M16 1V12H26" />
            <path d="M20 26L32 15C34 13 36 14 35 16L25 29M20 26C24 26 26 30 23 33C19 36 13 35 9 32C15 32 14 26 20 26Z" />
          </svg>
        </button>
      </div>
      <svg viewBox="0 0 270 16" className="mt-1.5 h-4 w-[270px] shrink-0" fill="none" stroke="#8a8886" strokeWidth="1.500" aria-hidden="true">
        <path d="M0 13.500H24L35.500 1.500L47.500 13.500H270" />
      </svg>
      <div className="mt-3.5 ml-4 grid grid-cols-[28px_28px_28px_28px_28px_28px] gap-3.5">
        {gallery.map(([name, art]) => (
          <button key={name} type="button" aria-label={name} className="size-7">
            <svg viewBox="0 0 28 28" className="size-7 overflow-visible" fill="none" aria-hidden="true">{art}</svg>
          </button>
        ))}
        <button type="button" aria-label="Get more visuals" className="size-7"><MoreDots /></button>
      </div>
      <div className="mt-2.5 mr-2 ml-2 flex gap-3 border-t border-dashed border-[#d2d0ce] pt-2 pl-1.5">
        <button type="button" aria-label="Tornado chart">
          <svg viewBox="0 0 31 31" className="size-[31px]" aria-hidden="true">
            <path d="M12 2H20L25 7L20 12H12Z" fill="#7fba00" />
            <path d="M10 13H5L0 19L5 24H10Z" fill="#e83b01" />
            <path d="M9 0H12V30H9Z" fill={DARK} />
            <path d="M13 12H31V31H13Z" fill="#fff" />
            <path d="M17 16V22M20 15V24M23 20V29M26 22V29M29 17V30" stroke="#111" strokeWidth="1.600" />
          </svg>
        </button>
        <button type="button" aria-label="Tile slicer">
          <svg viewBox="0 0 31 31" className="size-[31px]" aria-hidden="true">
            <rect x="1" y="2" width="13" height="12" rx="2" fill="#ff4b14" />
            <rect x="17" y="2" width="13" height="12" rx="2" fill="#a4e52a" />
            <rect x="1" y="17" width="12" height="13" rx="1" fill="#000" />
            <path d="M14 13H31V31H14Z" fill="#fff" />
            <path d="M17 16V23M20 15V25M23 20V29M26 22V29M29 17V30" stroke="#111" strokeWidth="1.600" />
          </svg>
        </button>
      </div>
      <div className="mt-[11px] flex min-h-0 flex-1 border-t border-[#d8d6d4]">
        <div className="flex-1 pt-3.5 pl-1.5">
          <h3 className="pl-3 text-[17px] leading-6 text-[#323130]">Values</h3>
          <div className="mt-[7px] flex h-[42px] items-center rounded-xs border border-dashed border-[#c8c6c4] bg-white pl-3.5 text-[17px] text-[#3b3a39]">Add data fields here</div>
          <h3 className="mt-4 mb-1.5 pl-3 text-[17px] leading-6 font-semibold text-[#484644]">Drill through</h3>
          <div className="pl-3">
            <Toggle label="Cross-report" on={false} />
            <Toggle label="Keep all filters" on />
          </div>
        </div>
        <div className="mt-1 h-[178px] w-[9px] rounded-full bg-[#d2d0ce]" />
      </div>
    </aside>
  );
}

function DataPane() {
  return (
    <aside aria-label="Data" className="w-[269px] shrink-0 bg-[#f3f2f1]">
      <div className="flex items-center justify-between pt-[13px] pr-2.5 pl-3">
        <h2 className="text-[22px] leading-8 font-semibold text-[#252423]">Data</h2>
        <button type="button" aria-label="Collapse data"><DoubleChevron /></button>
      </div>
      <label className="mt-[23px] mr-[5px] ml-1.5 flex h-[39px] items-center rounded-sm border border-[#797775] bg-white pl-3">
        <Magnifier className="size-[22px] text-[#3b3a39]" />
        <input type="text" aria-label="Search fields" placeholder="Search" className="mt-1 ml-2 w-0 flex-1 bg-transparent text-[19px] outline-none placeholder:text-[#484644]" />
      </label>
      <ul className="mt-[15px] pl-3.5">
        {fields.map(([name, glyph]) => (
          <li key={name}>
            <button type="button" className="flex h-9 items-center text-[17px] text-[#323130]">
              <svg viewBox="0 0 12 20" className="mr-1.5 h-5 w-3" fill="none" stroke="#484644" strokeWidth="1.200" aria-hidden="true">
                <path d="M1 1L10 10L1 19" />
              </svg>
              {glyph}
              <span className="ml-1.5">{name}</span>
            </button>
          </li>
        ))}
      </ul>
    </aside>
  );
}

function StatusBar() {
  return (
    <footer className="flex h-[36px] shrink-0 items-center border-t border-[#d8d6d4] bg-[#f3f2f1] text-[17px] text-[#484644]">
      <span className="flex-1 pl-2">Page 4 of 4</span>
      <button type="button" aria-label="Zoom out" className="h-0.5 w-1.5 bg-[#605e5c]" />
      <div className="relative mr-2 ml-2 flex h-5 w-[150px] items-center">
        <input
          type="range"
          aria-label="Zoom"
          min={0}
          max={100}
          defaultValue={29}
          className="h-px w-full appearance-none bg-[#605e5c] [&::-webkit-slider-thumb]:h-[17px] [&::-webkit-slider-thumb]:w-1.5 [&::-webkit-slider-thumb]:appearance-none [&::-webkit-slider-thumb]:bg-[#605e5c]"
        />
        <span className="absolute top-1.5 left-1/2 h-2 w-px bg-[#605e5c]" />
      </div>
      <button type="button" aria-label="Zoom in">
        <svg viewBox="0 0 12 12" className="size-3" stroke="#605e5c" strokeWidth="2" aria-hidden="true">
          <path d="M6 0V12M0 6H12" />
        </svg>
      </button>
      <span className="w-[88px] text-center text-[#605e5c]">63%</span>
      <button type="button" aria-label="Fit to page" className="mr-8">
        <svg viewBox="0 0 26 18" className="h-[18px] w-[26px]" fill="none" stroke="#605e5c" strokeWidth="1.700" aria-hidden="true">
          <path d="M1 1H25V17H1ZM4 7V4H8M18 4H22V7M22 11V14H18M8 14H4V11" />
        </svg>
      </button>
    </footer>
  );
}

export default function App() {
  return (
    <div className="flex h-screen flex-col overflow-hidden bg-[#f3f2f1] font-['Open_Sans','Noto_Sans',sans-serif]">
      <TitleBar />
      <Ribbon />
      <div className="flex min-h-0 flex-1">
        <ViewRail />
        <div className="flex min-w-0 flex-1 flex-col">
          <div className="flex min-h-0 flex-1">
            <Report />
            <FiltersPane />
          </div>
          <PageTabs />
        </div>
        <VisualizationsPane />
        <DataPane />
      </div>
      <StatusBar />
      <div className="flex h-0.5 shrink-0">
        <div className="w-[72px] bg-[#cfe6ea]" />
        <div className="w-[516px] bg-[#c8c8c8]" />
        <div className="flex-1 bg-[#cfdfec]" />
      </div>
    </div>
  );
}
